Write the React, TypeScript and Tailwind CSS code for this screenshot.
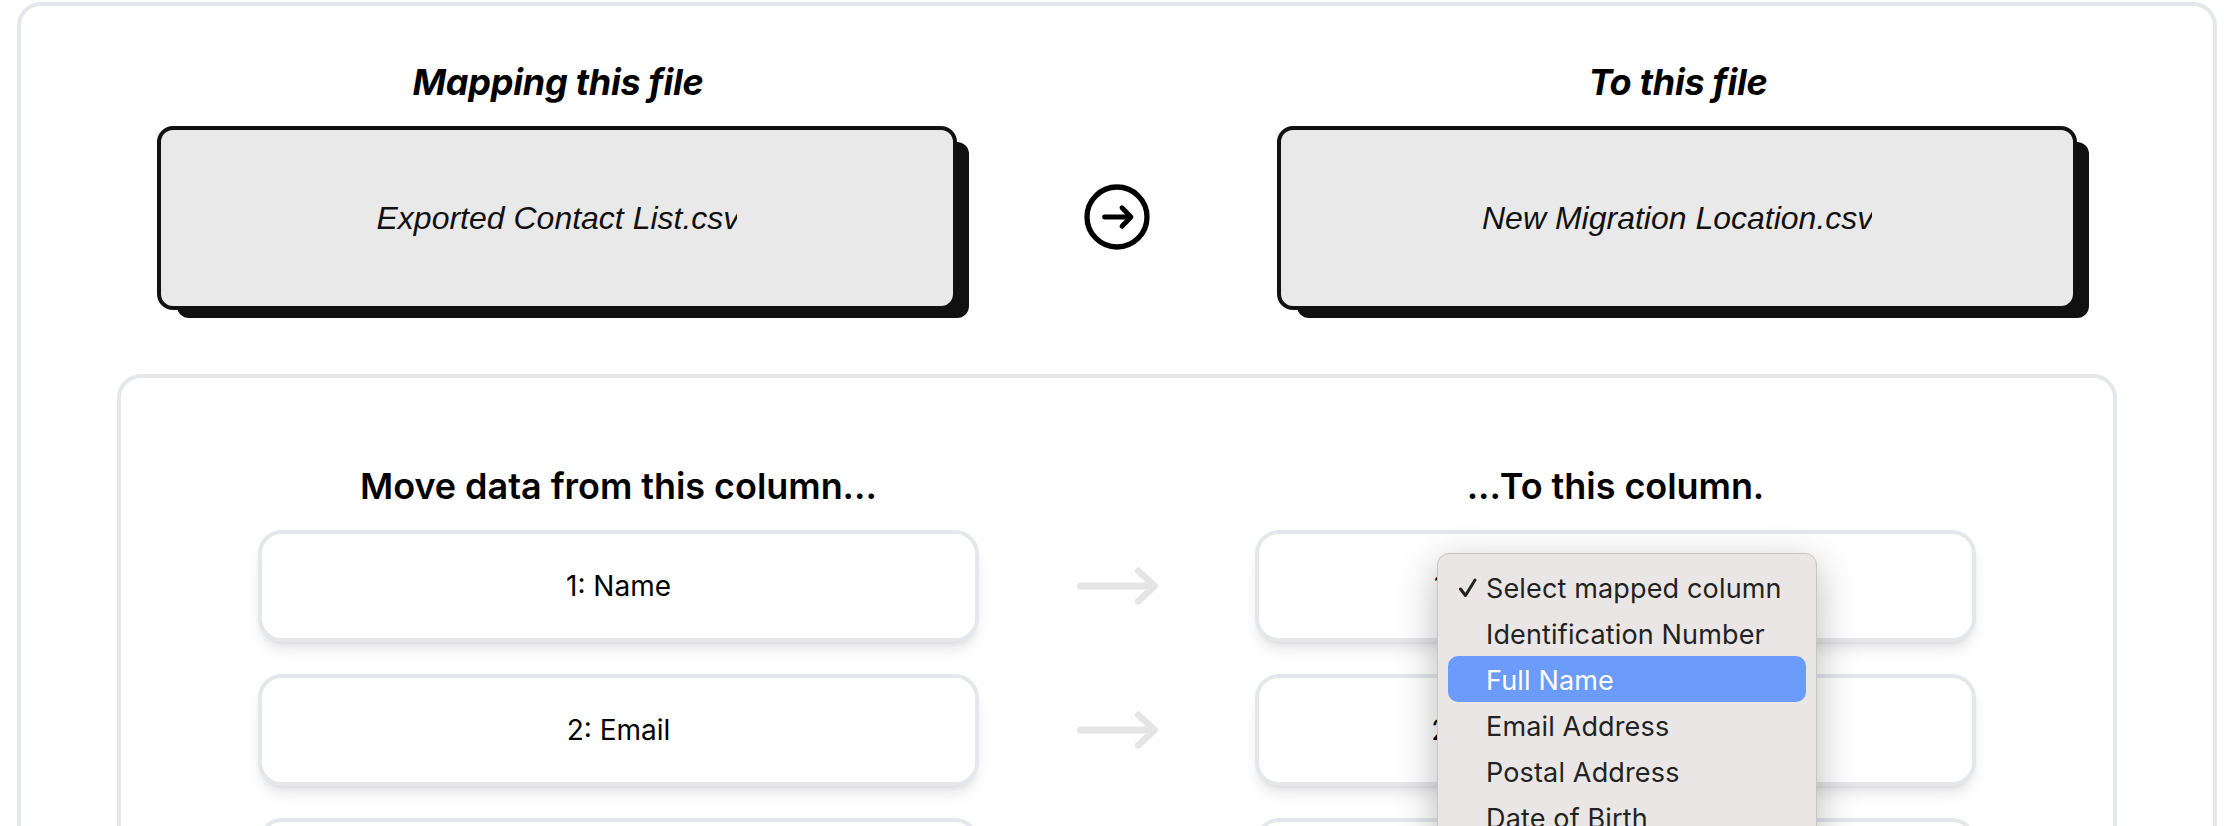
const options = [
  "Select mapped column",
  "Identification Number",
  "Full Name",
  "Email Address",
  "Postal Address",
  "Date of Birth",
];

function FileBox({ title, file, clip }: { title: string; file: string; clip: string }) {
  return (
    <div className="flex w-[800px] flex-col items-center gap-6">
      <h2 className="ml-[2px] text-4xl font-bold italic tracking-[-0.25px] text-black">{title}</h2>
      <div className="flex h-[184px] w-full items-center justify-center rounded-2xl border-4 border-[#111111] bg-[#e9e9e9] shadow-[16px_12px_0_-4px_#111111]">
        <span className={`overflow-hidden whitespace-nowrap font-['Liberation_Sans',sans-serif] text-[32px] italic text-[#111111] ${clip}`}>
          {file}
        </span>
      </div>
    </div>
  );
}

function CircleArrow() {
  return (
    <svg width="66" height="66" viewBox="0 0 66 66" fill="none" stroke="black" strokeLinecap="round" strokeLinejoin="round">
      <circle cx="33" cy="33" r="30" strokeWidth="5.3" />
      <path d="M20.5 33h26M38 23.8l9 9.2-9 9.2" strokeWidth="4.8" />
    </svg>
  );
}

function GrayArrow() {
  return (
    <svg width="84" height="40" viewBox="0 0 84 40" fill="none" stroke="#e5e5e5" strokeWidth="7" strokeLinecap="round" strokeLinejoin="round">
      <path d="M5.5 20h74" />
      <path d="M63.5 5l16 15-16 15" />
    </svg>
  );
}

function Row({ left, right }: { left: string; right: string }) {
  return (
    <div className="flex items-center justify-center">
      <div className="flex h-28 w-[721px] items-center justify-center rounded-3xl border-4 border-[#e5e7eb] bg-white text-[28px] text-black shadow-lg">
        {left}
      </div>
      <div className="flex w-[276px] justify-center">
        <GrayArrow />
      </div>
      <div className="flex h-28 w-[721px] items-center justify-center rounded-3xl border-4 border-[#e5e7eb] bg-white pr-8 text-[28px] text-black shadow-lg">
        {right}
      </div>
    </div>
  );
}

export default function App() {
  return (
    <div className="relative h-screen overflow-hidden bg-white font-['Inter',sans-serif]">
      <div className="ml-[17px] mt-[2px] w-[2200px] rounded-3xl border-4 border-[#e5e7eb] pt-14">
        <div className="flex justify-center">
          <FileBox title="Mapping this file" file="Exported Contact List.csv" clip="mr-[1px] w-[360px]" />
          <div className="flex w-[320px] items-center justify-center pt-[62px]">
            <CircleArrow />
          </div>
          <FileBox title="To this file" file="New Migration Location.csv" clip="w-[390px]" />
        </div>

        <div className="mx-24 mt-16 rounded-3xl border-4 border-[#e5e7eb] pt-[88px]">
          <div className="mb-6 flex justify-center">
            <h3 className="w-[721px] text-center text-4xl font-semibold tracking-[-0.05px] text-black">Move data from this column...</h3>
            <div className="w-[276px]" />
            <h3 className="w-[721px] text-center text-4xl font-semibold tracking-[-0.05px] text-black">...To this column.</h3>
          </div>
          <div className="flex flex-col gap-8">
            <Row left="1: Name" right="1: Select mapped column" />
            <Row left="2: Email" right="2: Select mapped column" />
            <Row left="3: Phone" right="3: Select mapped column" />
          </div>
        </div>
      </div>

      {/* open select menu */}
      <div className="absolute left-[1437px] top-[553px] w-[380px] rounded-xl border border-[#c9c5c5] bg-[#ebe6e6] px-[10px] py-[10px] text-[27px] tracking-[0.15px] text-[#222222] shadow-[0_12px_40px_rgba(0,0,0,0.28)]">
        {options.map((o, i) => (
          <div
            key={o}
            className={`relative flex h-[46px] items-center rounded-[10px] pl-[38px] pt-[4px] ${i === 2 ? "bg-[#6b9bfb] text-white" : ""}`}
          >
            {i === 0 && (
              <svg width="20" height="20" viewBox="0 0 20 20" fill="none" stroke="#222222" strokeWidth="3" strokeLinecap="round" strokeLinejoin="round" className="absolute left-[10px] top-[14px]">
                <path d="M2.5 11l5 6.5L17 2" />
              </svg>
            )}
            {o}
          </div>
        ))}
      </div>
    </div>
  );
}
